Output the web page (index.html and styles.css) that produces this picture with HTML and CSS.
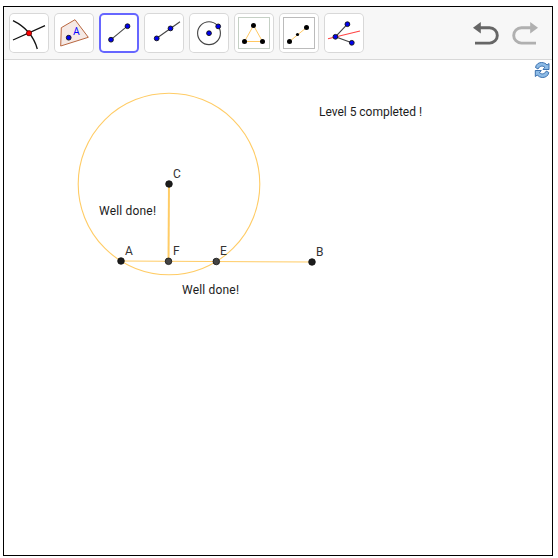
FILE: index.html
```html
<!DOCTYPE html>
<html lang="en">
<head>
<meta charset="utf-8">
<title>Geometry</title>
<link rel="stylesheet" href="styles.css">
</head>
<body>
<main class="applet">
  <header class="toolbar">
    <div class="tools">
      <button class="tool" aria-label="Intersect"><svg viewBox="0 0 40 40"><path class="bold" d="M4 7.7Q23 17 28.3 36M4 27 36 12.7"/><circle class="red-dot" cx="20" cy="20.2" r="2.6"/></svg></button>
      <button class="tool" aria-label="Point on object"><svg viewBox="0 0 40 40"><path class="poly" d="M7.3 14.7 21 6.7 34.3 24.3 6.7 33Z"/><circle class="dot" cx="14.7" cy="24.7" r="2.4"/><text class="glyph" x="19.3" y="22">A</text></svg></button>
      <button class="tool selected" aria-label="Segment"><svg viewBox="0 0 40 40"><path class="thin" d="M12 26.7 28.3 13.2"/><circle class="dot" cx="12" cy="26.7" r="2.4"/><circle class="dot" cx="28.5" cy="13.2" r="2.4"/></svg></button>
      <button class="tool" aria-label="Ray"><svg viewBox="0 0 40 40"><path class="thin" d="M12.7 25.3 36 8.7"/><circle class="dot" cx="12.7" cy="25.4" r="2.4"/><circle class="dot" cx="26.5" cy="15.4" r="2.4"/></svg></button>
      <button class="tool" aria-label="Circle"><svg viewBox="0 0 40 40"><circle class="thin" cx="20" cy="20.2" r="11.4"/><circle class="dot" cx="20" cy="20.2" r="2.4"/><circle class="dot" cx="29.2" cy="13.4" r="2.4"/></svg></button>
      <button class="tool" aria-label="Equilateral triangle"><svg viewBox="0 0 40 40"><rect class="frame-green" x="4.5" y="4.5" width="31" height="31"/><path class="gold" d="M19.5 12.5 10.5 28.5H28.5Z"/><circle cx="19.5" cy="12.5" r="2.5"/><circle cx="10.5" cy="28.5" r="2.5"/><circle cx="28.5" cy="28.5" r="2.5"/></svg></button>
      <button class="tool" aria-label="Midpoint"><svg viewBox="0 0 40 40"><rect class="frame-gray" x="4.5" y="4.5" width="31" height="31"/><path class="gold" d="M10.5 28.5 27.5 14.5"/><circle cx="10.5" cy="28.5" r="2.5"/><circle cx="27.5" cy="14.5" r="2.5"/><circle cx="18.5" cy="21.5" r="1.6"/></svg></button>
      <button class="tool" aria-label="Angle bisector"><svg viewBox="0 0 40 40"><path class="thin" d="M23.4 11.2 11.4 23.8 27.8 29.8"/><path class="red" d="M4 25.7 36 18"/><circle class="dot" cx="11.4" cy="23.8" r="2.4"/><circle class="dot" cx="23.4" cy="11.2" r="2.4"/><circle class="dot" cx="27.8" cy="29.8" r="2.4"/></svg></button>
    </div>
    <div class="history">
      <svg class="undo" viewBox="0 0 26 24"><path class="stem" d="M7 6.7H16.6A7.6 7.6 0 0 1 16.6 22.1H2"/><path class="head" d="M0 6.7 7.8 1V12.4Z"/></svg>
      <svg class="redo" viewBox="0 0 26 24"><path class="stem" d="M19 6.7H9.4A7.6 7.6 0 0 0 9.4 22.1H24"/><path class="head" d="M26 6.7 18.2 1V12.4Z"/></svg>
    </div>
  </header>
  <svg class="board" viewBox="4 60 548 495">
    <g class="lines">
      <circle cx="169" cy="184" r="90.8"/>
      <path d="M121 261 312 262"/>
      <path class="wide" d="M169 184 168.5 261.3"/>
    </g>
    <g class="points">
      <circle cx="169" cy="184" r="3.3"/>
      <circle cx="121" cy="261" r="3.3"/>
      <circle cx="312" cy="262" r="3.3"/>
      <circle class="derived" cx="168.5" cy="261.3" r="3.3"/>
      <circle class="derived" cx="216.3" cy="261.5" r="3.3"/>
    </g>
    <g class="labels">
      <text x="173" y="178">C</text>
      <text x="125" y="255">A</text>
      <text x="173" y="255">F</text>
      <text x="220" y="255">E</text>
      <text x="316" y="256">B</text>
    </g>
    <g class="notes">
      <text x="99" y="215" textLength="57">Well done!</text>
      <text x="182" y="294" textLength="57">Well done!</text>
      <text x="319" y="116" textLength="103">Level 5 completed !</text>
    </g>
    <g class="reset">
      <path d="M535.5 67.5C536 64 539 62.5 541.5 62.5C544 62.5 546 63.6 547 65L549 63.5V69.5H543L544.8 67.2C542.5 65.3 539.5 65.8 538 69Z"/>
      <path d="M548.8 72.5C548.3 76 545.3 77.5 542.8 77.5C540.3 77.5 538.3 76.4 537.3 75L535.3 76.5V70.5H541.3L539.5 72.8C541.8 74.7 544.8 74.2 546.3 71Z"/>
    </g>
  </svg>
</main>
</body>
</html>
```
FILE: styles.css
```css
body {
  display: flow-root;
  margin: 0;
  background: #fff;
  font-family: Roboto, sans-serif;
}
.applet {
  box-sizing: border-box;
  width: 550px;
  height: 550px;
  margin: 6px 0 0 3px;
  border: 1px solid #000;
  display: flex;
  flex-direction: column;
}
.toolbar {
  box-sizing: border-box;
  height: 53px;
  flex: none;
  padding: 6px 14px 6px 5px;
  display: flex;
  justify-content: space-between;
  background: #f7f7f7;
  border-bottom: 1px solid #d8d8d8;
}
.tools { display: flex; gap: 5px; }
.tool {
  width: 40px;
  height: 40px;
  padding: 0;
  border: 0;
  border-radius: 5px;
  background: #fff;
  box-shadow: inset 0 0 0 1px #d8d8d8;
}
.tool.selected { box-shadow: inset 0 0 0 2px #6666ff; }
.tool svg { display: block; width: 40px; height: 40px; }
.bold { fill: none; stroke: #111; stroke-width: 1.3; }
.thin { fill: none; stroke: #444; stroke-width: 1.1; }
.red { fill: none; stroke: #ff4444; stroke-width: 1.1; }
.gold { fill: none; stroke: #ffc861; stroke-width: 1; }
.dot { fill: #0000f0; stroke: #111; stroke-width: .9; }
.red-dot { fill: #f00; stroke: #500; stroke-width: .8; }
.poly { fill: #f5e9e5; stroke: #b8663f; stroke-width: 1; }
.glyph { fill: #0000ff; font: 10px "Open Sans", sans-serif; }
.frame-green { fill: #fff; stroke: #c5d0c5; }
.frame-gray { fill: #fff; stroke: #bbb; }
.history { display: flex; gap: 13px; padding-top: 8px; }
.history svg { width: 26px; height: 24px; }
.stem { fill: none; stroke: currentColor; stroke-width: 2.9; }
.head { fill: currentColor; }
.undo { color: #666; }
.redo { color: #b0b0b0; }
.board { display: block; width: 548px; height: 495px; }
.lines { fill: none; stroke: #ffcc66; stroke-width: 1.1; }
.wide { stroke-width: 2; }
.points { fill: #1c1c1c; stroke: #111; stroke-width: .8; }
.derived { fill: #444; }
.labels { font-size: 12px; fill: #333; }
.notes { font-size: 12px; fill: #1c1c1c; }
.reset { fill: #8dbbe6; stroke: #2f66a8; stroke-width: .9; }
```
